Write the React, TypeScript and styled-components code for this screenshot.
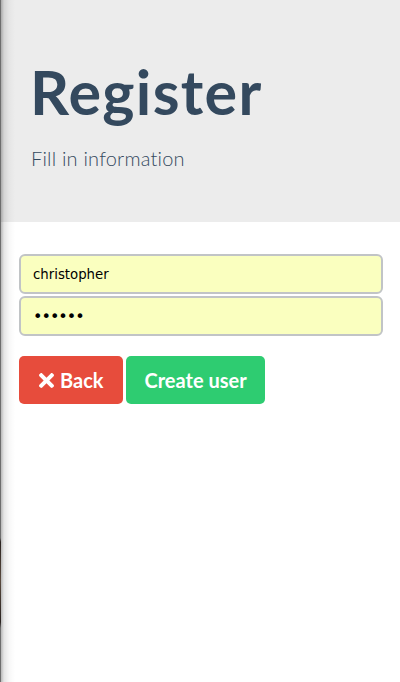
import React from "react";
import styled, { createGlobalStyle, css } from "styled-components";

const GlobalStyle = createGlobalStyle`
  html, body {
    margin: 0;
    padding: 0;
    background: #ffffff;
  }
  body {
    font-family: Lato, "Open Sans", sans-serif;
  }
  * {
    box-sizing: border-box;
  }
`;

const Page = styled.div`
  display: flex;
  min-height: 682px;
  width: 400px;
`;

const Edge = styled.div`
  width: 1px;
  flex: none;
  background: linear-gradient(
    to bottom,
    #6e6e6e 0px,
    #6e6e6e 538px,
    #2a2320 542px,
    #5a4a3e 580px,
    #2a2320 622px,
    #6e6e6e 628px,
    #6e6e6e 100%
  );
`;

const Panel = styled.div`
  flex: 1;
  position: relative;
  display: flex;
  flex-direction: column;
  background: #ffffff;

  &::before {
    content: "";
    position: absolute;
    top: 0;
    bottom: 0;
    left: 0;
    width: 14px;
    pointer-events: none;
    background: linear-gradient(
      to right,
      rgba(0, 0, 0, 0.28) 0px,
      rgba(0, 0, 0, 0.1) 3px,
      rgba(0, 0, 0, 0.03) 8px,
      rgba(0, 0, 0, 0) 14px
    );
  }
`;

const Header = styled.header`
  background: #ececec;
  height: 222px;
  padding: 55px 20px 0 29px;
  display: flex;
  flex-direction: column;
`;

const Title = styled.h1`
  margin: 0;
  font-family: Lato, sans-serif;
  font-weight: 700;
  font-size: 61px;
  line-height: 73px;
  letter-spacing: 1.3px;
  color: #34495e;
`;

const Subtitle = styled.p`
  margin: 18px 0 0 1px;
  font-family: Lato, sans-serif;
  font-weight: 300;
  font-size: 20px;
  line-height: 24px;
  letter-spacing: 0.2px;
  color: #34495e;
`;

const Form = styled.form`
  padding: 32px 17px 0 18px;
  display: flex;
  flex-direction: column;
`;

const Fields = styled.div`
  display: flex;
  flex-direction: column;
  gap: 2px;
`;

const Input = styled.input<{ $secret?: boolean }>`
  height: 40px;
  width: 100%;
  border: 2px solid #c1c4c6;
  border-radius: 6px;
  background: rgb(250, 255, 191);
  padding: 0 12px;
  font-family: "DejaVu Sans", sans-serif;
  font-size: ${(p) => (p.$secret ? "16px" : "13.3px")};
  letter-spacing: ${(p) => (p.$secret ? "-1px" : "0")};
  color: #000000;
  outline: none;
`;

const Actions = styled.div`
  display: flex;
  gap: 3px;
  margin-top: 20px;
`;

const variants = {
  danger: css`
    background: #e74c3c;
    padding: 0 19px 0 20px;
  `,
  success: css`
    background: #2ecc71;
    padding: 0 18px 0 19px;
  `,
};

const Button = styled.button<{ $variant: "danger" | "success" }>`
  display: inline-flex;
  align-items: center;
  gap: 6px;
  height: 48px;
  border: none;
  border-radius: 5px;
  color: #ffffff;
  font-family: Lato, sans-serif;
  font-weight: 700;
  font-size: 20px;
  cursor: pointer;
  ${(p) => variants[p.$variant]}
`;

const TimesIcon = () => (
  <svg width="15" height="15" viewBox="0 80 352 352" fill="#ffffff" aria-hidden="true">
    <path d="M242.72 256l100.07-100.07c12.28-12.28 12.28-32.19 0-44.48l-22.24-22.24c-12.28-12.28-32.19-12.28-44.48 0L176 189.28 75.93 89.21c-12.28-12.28-32.19-12.28-44.48 0L9.21 111.45c-12.28 12.28-12.28 32.19 0 44.48L109.28 256 9.21 356.07c-12.28 12.28-12.28 32.19 0 44.48l22.24 22.24c12.28 12.28 32.2 12.28 44.48 0L176 322.72l100.07 100.07c12.28 12.28 32.2 12.28 44.48 0l22.24-22.24c12.28-12.28 12.28-32.19 0-44.48L242.72 256z" />
  </svg>
);

export default function App() {
  return (
    <>
      <GlobalStyle />
      <Page>
        <Edge />
        <Panel>
          <Header>
            <Title>Register</Title>
            <Subtitle>Fill in information</Subtitle>
          </Header>
          <Form onSubmit={(e) => e.preventDefault()}>
            <Fields>
              <Input type="text" defaultValue="christopher" />
              <Input type="password" $secret defaultValue="secret" />
            </Fields>
            <Actions>
              <Button type="button" $variant="danger">
                <TimesIcon />
                Back
              </Button>
              <Button type="submit" $variant="success">
                Create user
              </Button>
            </Actions>
          </Form>
        </Panel>
      </Page>
    </>
  );
}
